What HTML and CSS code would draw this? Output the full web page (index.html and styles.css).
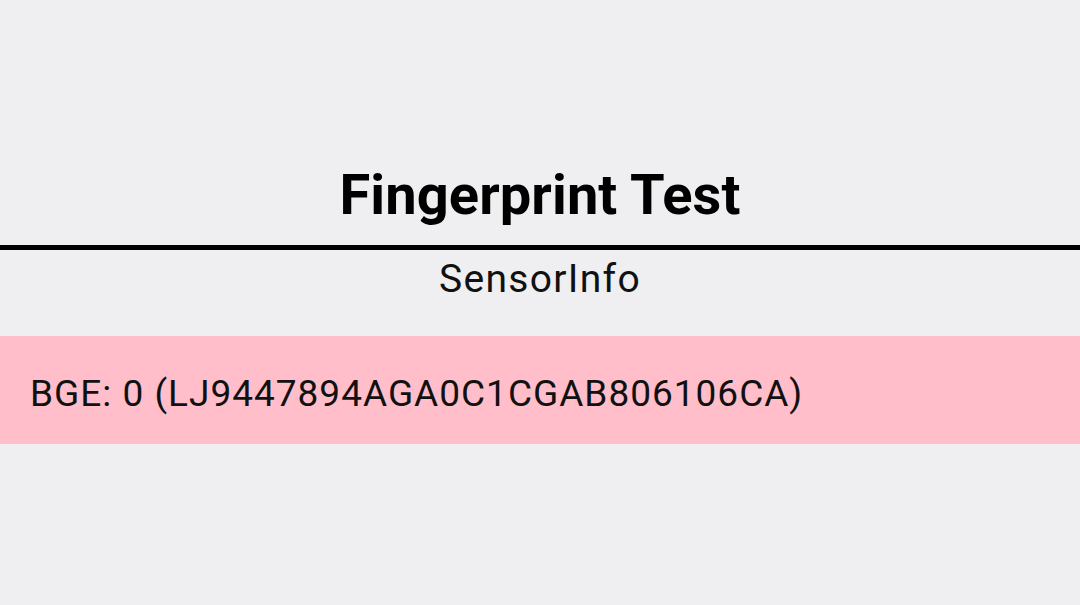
FILE: index.html
```html
<!DOCTYPE html>
<html>
<head>
<meta charset="utf-8">
<link rel="stylesheet" href="styles.css">
</head>
<body>
<div class="screen">
  <header class="title-bar">
    <h1 class="title">Fingerprint Test</h1>
  </header>
  <div class="divider"></div>
  <div class="subtitle">SensorInfo</div>
  <div class="info-row">BGE: 0 (LJ9447894AGA0C1CGAB806106CA)</div>
</div>
</body>
</html>
```

FILE: styles.css
```css
html, body {
  margin: 0;
  padding: 0;
}
body {
  background: #efeff1;
  font-family: Roboto, "Liberation Sans", sans-serif;
  color: #000;
}
.screen {
  width: 1080px;
  height: 605px;
  display: flex;
  flex-direction: column;
}
.title-bar {
  height: 245px;
  box-sizing: border-box;
  padding-top: 167px;
  display: flex;
  justify-content: center;
}
.title {
  margin: 0;
  font-size: 56px;
  line-height: 56px;
  font-weight: 700;
  letter-spacing: 0.1px;
}
.divider {
  height: 5px;
  background: #000;
}
.subtitle {
  margin-top: 10px;
  font-size: 39px;
  line-height: 39px;
  letter-spacing: 1.3px;
  text-align: center;
  color: #111;
}
.info-row {
  margin-top: 37px;
  height: 108px;
  box-sizing: border-box;
  padding-left: 30px;
  padding-top: 6px;
  display: flex;
  align-items: center;
  background: #ffbec9;
  font-size: 37px;
  line-height: 37px;
  letter-spacing: 1px;
  color: #111;
}
```
